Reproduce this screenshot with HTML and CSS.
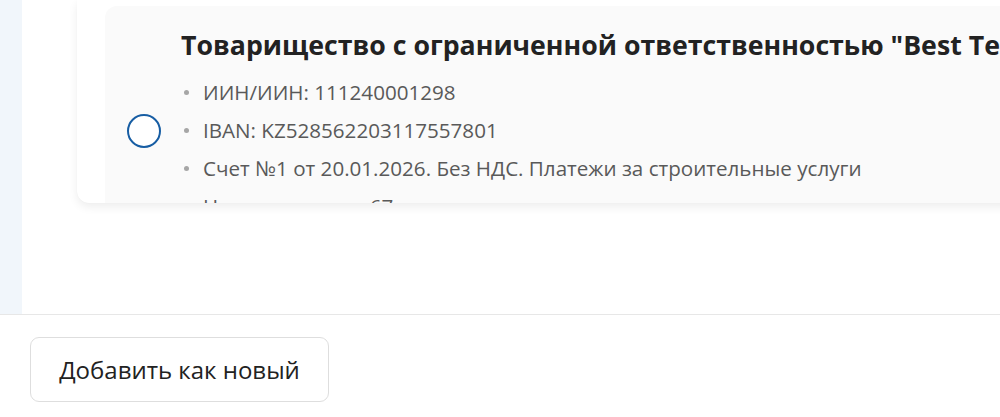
FILE: index.html
```html
<!DOCTYPE html>
<html lang="ru">
<head>
<meta charset="utf-8">
<title>Выбор получателя</title>
<link rel="stylesheet" href="styles.css">
</head>
<body>
<div class="page">
  <div class="main">
    <div class="strip"></div>
    <div class="content">
      <div class="card">
        <div class="item">
          <span class="radio"></span>
          <div class="info">
            <div class="title">Товарищество с ограниченной ответственностью "Best Team Construction"</div>
            <ul class="details">
              <li>ИИН/ИИН: 111240001298</li>
              <li>IBAN: KZ528562203117557801</li>
              <li>Счет №1 от 20.01.2026. Без НДС. Платежи за строительные услуги</li>
              <li>Номер платежа: 67</li>
            </ul>
          </div>
        </div>
      </div>
    </div>
  </div>
  <div class="footer">
    <button class="btn" type="button">Добавить как новый</button>
  </div>
</div>
</body>
</html>
```

FILE: styles.css
```css
* { box-sizing: border-box; }
html, body { margin: 0; padding: 0; background: #fff; }
body { font-family: "Open Sans", "Noto Sans", sans-serif; width: 1000px; height: 417px; overflow: hidden; }
.page { display: flex; flex-direction: column; height: 417px; }
.main { display: flex; height: 314px; flex: none; }
.strip { width: 22px; background: #f1f6fb; flex: none; }
.content { flex: 1; padding-left: 55px; min-width: 0; overflow: hidden; }
.card {
  width: 1000px;
  height: 203px;
  background: #fff;
  border-radius: 0 0 12px 12px;
  box-shadow: 0 4px 10px rgba(0,0,0,0.07), 0 0 1px rgba(0,0,0,0.06);
  padding: 6px 0 0 28px;
  overflow: hidden;
}
.item {
  display: flex;
  align-items: flex-start;
  background: #fafafa;
  border-radius: 12px 0 0 0;
  padding: 23px 0 40px 22px;
  gap: 20px;
}
.radio {
  flex: none;
  width: 34px;
  height: 34px;
  margin-top: 85px;
  border: 2px solid #175da3;
  border-radius: 50%;
  background: #fff;
}
.info { flex: 1; min-width: 0; }
.title {
  font-size: 26.7px;
  line-height: 32px;
  font-weight: 700;
  color: #222;
  white-space: nowrap;
}
.details { list-style: none; margin: 12px 0 0; padding: 0; }
.details li {
  position: relative;
  font-size: 20.6px;
  line-height: 38px;
  color: #595959;
  padding-left: 22px;
  white-space: nowrap;
}
.details li::before {
  content: "";
  position: absolute;
  left: 3px;
  top: 17px;
  width: 5px;
  height: 5px;
  border-radius: 50%;
  background: #a6a6a6;
}
.footer {
  flex: 1;
  border-top: 1px solid #e7e7e7;
  padding: 22px 30px;
}
.btn {
  width: 299px;
  height: 65px;
  border: 1px solid #dedede;
  border-radius: 9px;
  background: #fff;
  font-family: "Open Sans", "Noto Sans", sans-serif;
  font-size: 24px;
  color: #222;
  padding: 0;
}
```
